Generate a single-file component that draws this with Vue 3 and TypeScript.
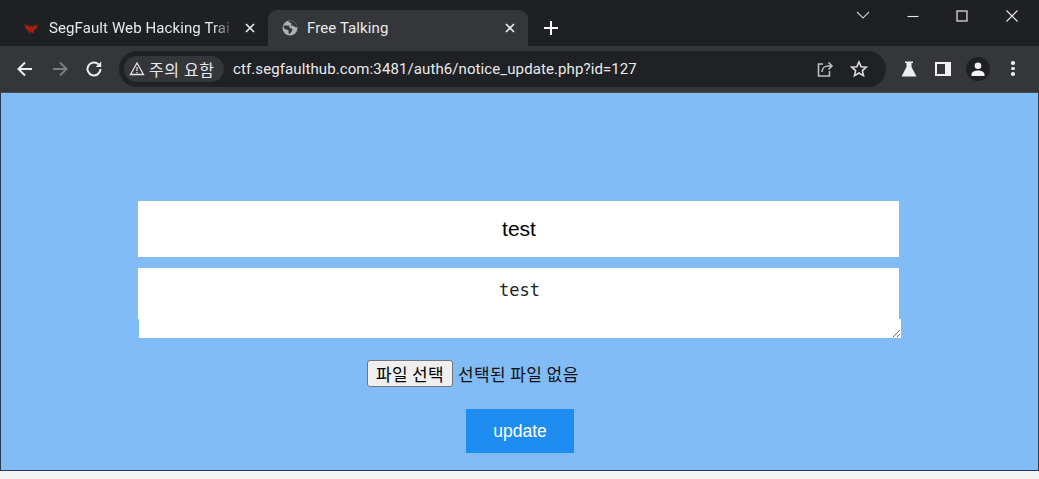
<script setup lang="ts">
const url = 'ctf.segfaulthub.com:3481/auth6/notice_update.php?id=127'
</script>

<template>
  <div class="window">
    <header class="tabstrip">
      <div class="tab inactive">
        <svg class="favicon" width="16" height="16" viewBox="0 0 16 16">
          <path d="M1.500 3.500l2.500 3 1-2.500 1.500 3.500L8 5l1.500 2.500L11 4l1 2.500 2.500-3-1 5.500-2.500 1-1 3.500-2-2-2 2-1-3.500-2.500-1z" fill="#a3200f" />
        </svg>
        <span class="tab-title fade">SegFault Web Hacking Trai</span>
        <svg class="tab-x" width="10" height="10" viewBox="0 0 10 10">
          <path d="M1 1l8 8M9 1l-8 8" stroke="#e8eaed" stroke-width="1.700" />
        </svg>
      </div>
      <div class="tab active">
        <svg class="globe" width="16" height="16" viewBox="0 0 16 16">
          <circle cx="8" cy="8" r="7.500" fill="#aeb0b4" />
          <path d="M6 1.200C7 2.500 9 2.500 9.500 3.800S8 6 6.500 5.800 4 5.500 2.500 5.500 1.500 8 3 9s3 .5 3.500 1.500-.5 2.500.5 3.500c1-.5 2-1.500 2.800-2.800s1-2-.3-2.700-2.300-.8-2.300-2S10.500 5 12.500 6.500s2 1 2.800.5C15 4 12.500 1.500 9.500.7z" fill="#35363a" />
        </svg>
        <span class="tab-title">Free Talking</span>
        <svg class="tab-x" width="10" height="10" viewBox="0 0 10 10">
          <path d="M1 1l8 8M9 1l-8 8" stroke="#e8eaed" stroke-width="1.700" />
        </svg>
      </div>
      <svg class="plus" width="14" height="14" viewBox="0 0 14 14">
        <path d="M7 0v14M0 7h14" stroke="#fff" stroke-width="2" />
      </svg>
      <div class="caption">
        <svg class="cap-btn" width="48" height="14" viewBox="0 0 48 14">
          <path d="M18 3l6 6 6-6" fill="none" stroke="#c9cacc" stroke-width="1.100" />
        </svg>
        <svg class="cap-btn" width="48" height="14" viewBox="0 0 48 14">
          <path d="M18.500 7.500h11" stroke="#e8e8e9" stroke-width="1.100" />
        </svg>
        <svg class="cap-btn" width="48" height="14" viewBox="0 0 48 14">
          <rect x="19" y="2" width="10" height="10" fill="none" stroke="#e8e8e9" stroke-width="1.200" />
        </svg>
        <svg class="cap-btn" width="48" height="14" viewBox="0 0 48 14">
          <path d="M18.500 1.500l11 11M29.500 1.500l-11 11" stroke="#e8e8e9" stroke-width="1.100" />
        </svg>
      </div>
    </header>

    <nav class="toolbar">
      <svg class="nav-ic first" width="18" height="18" viewBox="0 0 18 18">
        <path d="M16 9H3M9 2.500L2.500 9 9 15.500" fill="none" stroke="#eceded" stroke-width="2" />
      </svg>
      <svg class="nav-ic" width="18" height="18" viewBox="0 0 18 18">
        <path d="M2 9h13M9 2.500L15.500 9 9 15.500" fill="none" stroke="#7c7d80" stroke-width="2" />
      </svg>
      <svg class="nav-ic refresh" width="18" height="18" viewBox="0 0 18 18">
        <path d="M15.500 9a6.500 6.500 0 1 1-1.900-4.600" fill="none" stroke="#eceded" stroke-width="2" />
        <path d="M16.200 1.500V7H10.700z" fill="#eceded" />
      </svg>
      <div class="omnibox">
        <div class="chip">
          <svg width="16" height="15" viewBox="0 0 16 15">
            <path d="M8 2l6.500 11.500h-13z" fill="none" stroke="#e4e5e6" stroke-width="1.300" />
            <path d="M8 6v4M8 11v1.300" stroke="#e4e5e6" stroke-width="1.200" />
          </svg>
          <span>주의 요함</span>
        </div>
        <span class="url">{{ url }}</span>
        <svg class="share" width="18" height="18" viewBox="0 0 18 18">
          <path d="M7 4H2.500v12h11v-5" fill="none" stroke="#bdbec0" stroke-width="1.600" />
          <path d="M6 12c0-4 3-6 6-6h4M12.500 2.500L16 6l-3.500 3.500" fill="none" stroke="#bdbec0" stroke-width="1.600" />
        </svg>
        <svg class="star" width="18" height="18" viewBox="0 0 18 18">
          <path d="M9 2l2.100 4.700 5.100.5-3.800 3.400 1.100 5L9 13l-4.500 2.600 1.100-5L1.800 7.200l5.100-.5z" fill="none" stroke="#d8d9da" stroke-width="1.600" />
        </svg>
      </div>
      <svg class="flask" width="16" height="16" viewBox="0 0 16 16">
        <path d="M4 .5h8v1.500h-1.500v4L15.500 15.500H.5L5.500 6V2H4z" fill="#eceded" />
      </svg>
      <svg class="panel" width="16" height="16" viewBox="0 0 16 16">
        <path d="M0 1h16v14H0zM2 3v10h8V3z" fill="#f2f2f3" fill-rule="evenodd" />
      </svg>
      <div class="avatar">
        <svg width="16" height="14" viewBox="0 0 16 14">
          <circle cx="8" cy="3.800" r="3.300" fill="#f3f3f4" />
          <path d="M1.500 14v-1.500C1.500 10 5 8.600 8 8.600s6.500 1.400 6.500 3.900V14z" fill="#f3f3f4" />
        </svg>
      </div>
      <div class="dots"><i></i><i></i><i></i></div>
    </nav>

    <main class="page">
      <form class="form" @submit.prevent>
        <input class="title-field" type="text" value="test" />
        <div class="body-wrap">
          <textarea class="body-field">test</textarea>
        </div>
        <div class="file-row">
          <button class="file-btn" type="button">파일 선택</button>
          <span class="file-name">선택된 파일 없음</span>
        </div>
        <button class="update" type="submit">update</button>
      </form>
    </main>
  </div>
</template>

<style>
html, body { margin: 0; background: #fff; overflow: hidden; }
</style>

<style scoped>
.window {
  width: 1039px;
  height: 479px;
  background: #f4f4f4;
  font-family: "Roboto", "Noto Sans CJK KR", sans-serif;
  overflow: hidden;
}
.tabstrip {
  height: 46px;
  background: #1f2024;
  display: flex;
  align-items: flex-end;
  box-sizing: border-box;
}
.tab {
  height: 36px;
  display: flex;
  align-items: center;
  box-sizing: border-box;
  color: #e8eaed;
  font-size: 15px;
}
.tab.inactive {
  width: 268px;
  padding-left: 23px;
}
.tab.active {
  width: 260px;
  background: #35363a;
  border-radius: 9px 9px 0 0;
  padding-left: 14px;
}
.favicon { flex: none; margin-right: 10px; }
.globe { flex: none; margin-right: 9px; }
.tab-title {
  flex: 1;
  white-space: nowrap;
  overflow: hidden;
  letter-spacing: 0.1px;
}
.fade {
  -webkit-mask-image: linear-gradient(to right, #000 88%, transparent 100%);
  mask-image: linear-gradient(to right, #000 88%, transparent 100%);
}
.tab-x { flex: none; margin: 0 13px 0 10px; }
.plus { margin: 0 0 11px 16px; flex: none; }
.caption {
  margin-left: auto;
  align-self: flex-start;
  display: flex;
  padding-top: 9px;
  width: 197px;
  margin-right: 3px;
  justify-content: space-between;
}
.toolbar {
  height: 47px;
  background: #35363a;
  display: flex;
  align-items: center;
  box-sizing: border-box;
  border-bottom: 1px solid #4a4b4f;
  padding-bottom: 1px;
}
.nav-ic { flex: none; margin-left: 17px; }
.nav-ic.first { margin-left: 16px; }
.nav-ic.refresh { margin-left: 16px; }
.omnibox {
  width: 767px;
  height: 36px;
  margin-left: 16px;
  border-radius: 18px;
  background: #202124;
  display: flex;
  align-items: center;
  box-sizing: border-box;
  padding-left: 5px;
  flex: none;
}
.chip {
  height: 26px;
  width: 100px;
  box-sizing: border-box;
  border-radius: 13px;
  background: #35363a;
  display: flex;
  align-items: center;
  gap: 4px;
  padding-left: 5px;
  color: #e8eaed;
  font-size: 16px;
  letter-spacing: 0.5px;
  white-space: nowrap;
}
.url {
  margin-left: 9px;
  color: #e8eaed;
  font-size: 15px;
  white-space: nowrap;
  letter-spacing: 0.1px;
}
.share { margin-left: auto; flex: none; }
.star { margin: 0 18px 0 16px; flex: none; }
.flask { margin-left: 15px; flex: none; }
.panel { margin-left: 18px; flex: none; }
.avatar {
  width: 24px;
  height: 24px;
  margin-left: 15px;
  border-radius: 50%;
  background: #1f2024;
  display: flex;
  align-items: center;
  justify-content: center;
  flex: none;
}
.dots {
  margin-left: 21px;
  width: 4px;
  display: flex;
  flex-direction: column;
  gap: 2px;
  flex: none;
}
.dots i {
  display: block;
  width: 3.500px;
  height: 3.500px;
  border-radius: 50%;
  background: #eceded;
}
.page {
  height: 378px;
  background: #81bcf6;
  box-sizing: border-box;
  border-bottom: 1px solid #2a3a52;
  border-left: 1px solid #2a3a52;
  border-right: 1px solid #2a3a52;
  padding-top: 108px;
}
.form {
  display: flex;
  flex-direction: column;
  align-items: flex-start;
  padding-left: 137px;
}
.title-field {
  width: 761px;
  height: 56px;
  box-sizing: border-box;
  border: 0;
  background: #fff;
  padding: 0 0 0 1px;
  margin: 0;
  text-align: center;
  font: 21px "Liberation Sans", sans-serif;
  color: #000;
  outline: none;
}
.body-wrap {
  position: relative;
  width: 763px;
  height: 70px;
  margin-top: 11px;
}
/* the reference is a stitched capture: the lower part sits 1px to the right */
.body-wrap::before {
  content: "";
  position: absolute;
  left: 0;
  top: 51px;
  width: 1px;
  height: 19px;
  background: #81bcf6;
}
.body-wrap::after {
  content: "";
  position: absolute;
  right: 0;
  top: 0;
  width: 2px;
  height: 51px;
  background: #81bcf6;
}
.body-field {
  width: 763px;
  height: 70px;
  margin: 0;
  box-sizing: border-box;
  border: 0;
  background: #fff;
  padding: 12px 0 0;
  text-align: center;
  font: 17px "DejaVu Sans Mono", monospace;
  color: #222;
  outline: none;
  display: block;
}
.file-row {
  margin: 22px 0 0 229px;
  display: flex;
  align-items: center;
  height: 27px;
}
.file-btn {
  width: 86px;
  height: 27px;
  box-sizing: border-box;
  background: #efefef;
  border: 1px solid #767676;
  border-radius: 3px;
  padding: 0;
  font: 17px "Noto Sans CJK KR", sans-serif;
  letter-spacing: 0.3px;
  color: #000;
}
.file-name {
  margin-left: 5px;
  font: 17px "Noto Sans CJK KR", sans-serif;
  letter-spacing: 0.4px;
  color: #111;
}
.update {
  margin: 22px 0 0 328px;
  width: 108px;
  height: 44px;
  border: 0;
  background: #1e8cf0;
  color: #fff;
  font: 17.500px "Liberation Sans", sans-serif;
  padding: 0;
}
</style>
